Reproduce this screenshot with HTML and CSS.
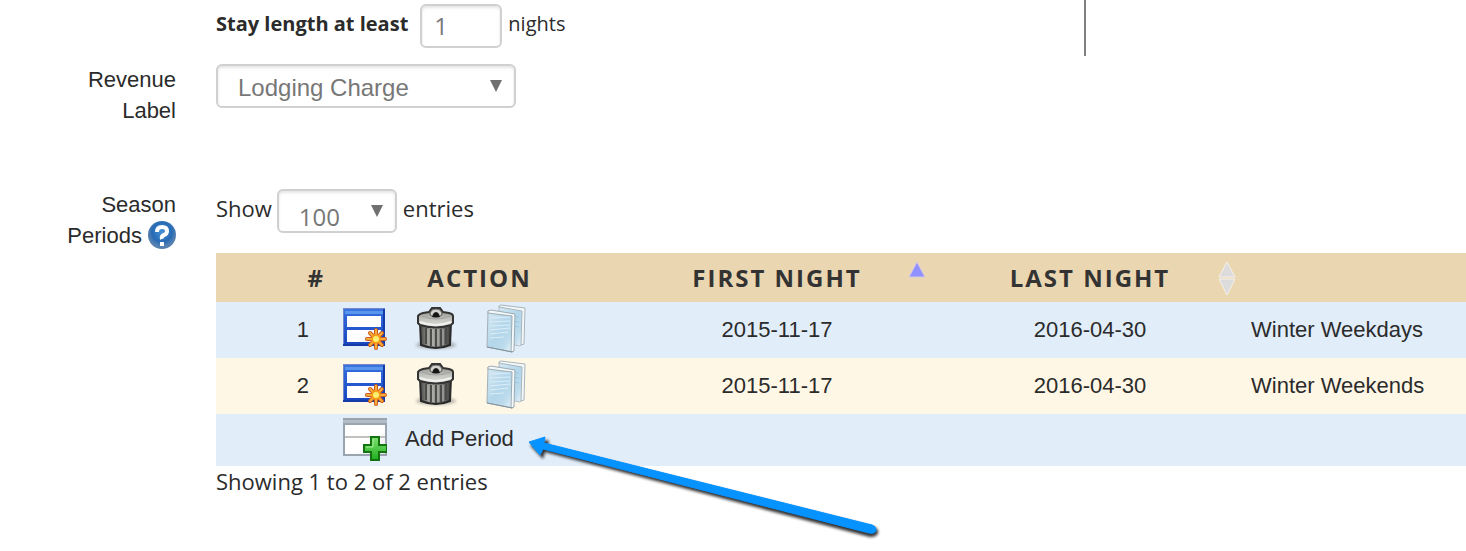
FILE: index.html
```html
<!DOCTYPE html>
<html lang="en">
<head>
<meta charset="utf-8">
<title>Season Periods</title>
<link rel="stylesheet" href="styles.css">
</head>
<body>
<svg class="defs" aria-hidden="true">
  <defs>
    <linearGradient id="blueframe" x2="0" y2="1"><stop offset="0" stop-color="#3f78e0"/><stop offset=".2" stop-color="#2f66d8"/><stop offset="1" stop-color="#1745bf"/></linearGradient>
    <linearGradient id="metal"><stop offset="0" stop-color="#4a4a48"/><stop offset=".35" stop-color="#a5a5a2"/><stop offset=".65" stop-color="#868683"/><stop offset="1" stop-color="#3d3d3b"/></linearGradient>
    <linearGradient id="lid" x2="0" y2="1"><stop offset="0" stop-color="#858580"/><stop offset=".6" stop-color="#c4c4c0"/><stop offset="1" stop-color="#e2e2df"/></linearGradient>
    <linearGradient id="sheet" x2="1" y2="1"><stop offset="0" stop-color="#d5e9f3"/><stop offset=".5" stop-color="#b3d6ea"/><stop offset=".75" stop-color="#bcdbec"/><stop offset="1" stop-color="#edf6fa"/></linearGradient>
    <linearGradient id="pane" x2="1" y2="1"><stop offset="0" stop-color="#fff"/><stop offset=".6" stop-color="#fff"/><stop offset="1" stop-color="#e2e4ec"/></linearGradient>
    <linearGradient id="plus" x2="0" y2="1"><stop offset="0" stop-color="#7fe070"/><stop offset="1" stop-color="#1fae1f"/></linearGradient>
    <radialGradient id="ball" cy=".4"><stop offset="0" stop-color="#4391d6"/><stop offset=".7" stop-color="#286bb5"/><stop offset="1" stop-color="#5580b0"/></radialGradient>
    <filter id="soft" x="-20%" y="-100%" width="140%" height="300%"><feGaussianBlur stdDeviation="1.5"/></filter>
  </defs>
  <symbol id="edit" viewBox="0 0 44 44">
    <path d="M0 1h42v38H0z" fill="url(#blueframe)"/>
    <path d="M0 1h42v1H1v37H0z" fill="#7187c9"/>
    <path d="M2 4h38v3H2z" fill="#5b96ee"/>
    <path d="M40 2h2v37H0v-2h40z" fill="#143ca8"/>
    <path d="M4 9h34v11H4zM4 23h34v12H4z" fill="url(#pane)"/>
    <g stroke="#c85a1c" stroke-width="4" stroke-linecap="round"><path d="M33 23v18M24 32h18M27 26l12 12M39 26L27 38"/></g>
    <g stroke="#f9ae3c" stroke-width="2" stroke-linecap="round"><path d="M33 23v18M24 32h18M27 26l12 12M39 26L27 38"/></g>
    <circle cx="33" cy="32" r="5" fill="#f99b1a"/><circle cx="33" cy="32" r="3" fill="#fff270"/>
  </symbol>
  <symbol id="trash" viewBox="0 0 44 44">
    <ellipse cx="22" cy="38" rx="20" ry="4" fill="#777" opacity=".5" filter="url(#soft)"/>
    <path d="M6 15l1 23q15 6 29 0l1-23z" fill="url(#metal)" stroke="#292929" stroke-width="2"/>
    <path d="M12 21v16M17 22v17M22 22v18M27 22v17M32 21v16" stroke="#4b4b49" stroke-width="2"/>
    <path d="M14 22v16M19 22v17M24 22v17M29 22v16" stroke="#b5b5b2"/>
    <path d="M4 9q1-2 5-3l6-1L18 1h8l3 4 6 1q4 1 4 3v7l-2 2q-15 5-31 0l-2-2z" fill="url(#lid)" stroke="#333" stroke-width="2"/>
    <path d="M6 15q15 6 31 0" fill="none" stroke="#f1f1ee" stroke-width="2"/>
    <path d="M8 9q14 6 28 0" fill="none" stroke="#a1a19d"/>
    <path d="M16 8q0-6 6-6t6 6q-6 5-12 0z" fill="#d2d2cf" stroke="#555"/>
    <path d="M19 7q3-4 6 0l1 3h-8z" fill="#171717"/>
  </symbol>
  <symbol id="copy" viewBox="0 0 44 50">
    <path d="M14 2l24 3-1 35-2 2-21-4z" fill="url(#sheet)" stroke="#b4bfc5" stroke-linejoin="round"/>
    <path d="M14 2l2-1 24 3-1 36-3 1 1-34-23-4z" fill="#f3f7f9" stroke="#a9b6bc"/>
    <path d="M20 11l14 2M20 16l14 2M20 21l14 2" stroke="#9acbe6"/>
    <path d="M3 7l25 4v37L2 43z" fill="url(#sheet)" stroke="#a5b0b7" stroke-linejoin="round"/>
    <path d="M3 7l3-1 24 4-1 37-3 1 1-36L3 9z" fill="#f3f8fa" stroke="#9dabb3"/>
    <path d="M5 14l20-1M5 18l20-1M5 22l20-1M5 26l20-2M5 30l18-2M5 34l14-1" stroke="#dceef8"/>
    <path d="M2 43l25 5" stroke="#7f929d" fill="none"/>
  </symbol>
  <symbol id="add" viewBox="0 0 44 44">
    <path d="M0 1h44v38H0z" fill="#9aa4ae"/>
    <path d="M0 3h44v3H0z" fill="#b3bdc8"/>
    <path d="M2 8h40v11H2zM2 21h40v16H2z" fill="url(#pane)"/>
    <path d="M2 19h40v2H2z" fill="#c1c1bd"/>
    <path d="M28 20h8v8h8v7h-8v8h-8v-8h-7v-7h7z" fill="url(#plus)" stroke="#12730f" stroke-width="2"/>
    <path d="M30 22v8h-7" fill="none" stroke="#a7f098"/>
  </symbol>
</svg>

<form class="form">
  <div class="row row-stay">
    <div class="stay">
      <label class="stay-label" for="stay">Stay length at least</label>
      <input class="control control-stay" id="stay" type="text" value="1">
      <span>nights</span>
    </div>
  </div>

  <div class="row row-revenue">
    <label class="label" for="revenue">Revenue<br>Label</label>
    <div class="picker picker-revenue">
      <select class="control control-revenue" id="revenue"><option>Lodging Charge</option></select>
      <svg class="caret" viewBox="0 0 12 12" aria-hidden="true"><path d="M0 0h12L6 12z"/></svg>
    </div>
  </div>

  <div class="row row-season">
    <div class="label">Season<br>Periods
      <svg class="help" viewBox="0 0 28 28" role="img" aria-label="Help"><circle cx="14" cy="14" r="14" fill="url(#ball)"/><path d="M9 11q0-5 5-5t5 4q0 3-3 4t-2 4" fill="none" stroke="#fff" stroke-width="4"/><path d="M12 21h4v4h-4z" fill="#fff"/></svg>
    </div>
    <div class="season">
      <div class="length">
        <label for="length">Show</label>
        <div class="picker picker-length">
          <select class="control control-length" id="length"><option>100</option></select>
          <svg class="caret" viewBox="0 0 12 12" aria-hidden="true"><path d="M0 0h12L6 12z"/></svg>
        </div>
        <span>entries</span>
      </div>

      <table class="periods">
        <colgroup><col class="col-number"><col class="col-action"><col class="col-first"><col class="col-last"><col></colgroup>
        <thead>
          <tr>
            <th class="number">#</th>
            <th>Action</th>
            <th>First Night<svg class="sort" viewBox="0 0 20 34" aria-hidden="true"><path d="M10 1l8 15H2z" fill="#9090ff" stroke="#d5cbe4"/></svg></th>
            <th>Last Night<svg class="sort" viewBox="0 0 20 34" aria-hidden="true"><path d="M10 1l8 15H2zM10 34l8-16H2z" fill="#dcdcdc" stroke="#f5f1ea"/></svg></th>
            <th></th>
          </tr>
        </thead>
        <tbody>
          <tr>
            <td class="number">1</td>
            <td><div class="actions">
              <button class="action" type="button" aria-label="Edit"><svg class="icon"><use href="#edit"/></svg></button>
              <button class="action" type="button" aria-label="Delete"><svg class="icon"><use href="#trash"/></svg></button>
              <button class="action" type="button" aria-label="Copy"><svg class="icon icon-copy"><use href="#copy"/></svg></button>
            </div></td>
            <td>2015-11-17</td><td>2016-04-30</td><td class="name">Winter Weekdays</td>
          </tr>
          <tr>
            <td class="number">2</td>
            <td><div class="actions">
              <button class="action" type="button" aria-label="Edit"><svg class="icon"><use href="#edit"/></svg></button>
              <button class="action" type="button" aria-label="Delete"><svg class="icon"><use href="#trash"/></svg></button>
              <button class="action" type="button" aria-label="Copy"><svg class="icon icon-copy"><use href="#copy"/></svg></button>
            </div></td>
            <td>2015-11-17</td><td>2016-04-30</td><td class="name">Winter Weekends</td>
          </tr>
          <tr class="add-row">
            <td></td>
            <td colspan="4"><div class="add-cell">
              <a class="add" href="#add-period"><svg class="icon"><use href="#add"/></svg>Add Period</a>
              <svg class="arrow" viewBox="0 0 360 110" aria-hidden="true">
                <g transform="translate(2 3)" fill="#000" opacity=".8" filter="url(#soft)"><path d="M3 7L20 2q3 0 1 6L347 89q5 2 4 6t-8 4L18 14l-2 7z"/></g>
                <path d="M4 7L20 2l-1 6L347 90q4 1 4 5t-7 3L18 14l-3 6z" fill="#0692ff" stroke="#0692ff" stroke-linejoin="round"/>
              </svg>
            </div></td>
          </tr>
        </tbody>
      </table>
      <div class="info">Showing 1 to 2 of 2 entries</div>
    </div>
  </div>
</form>
</body>
</html>
```

FILE: styles.css
```css
* { box-sizing: border-box; }

body {
  min-height: 100vh;
  margin: 0;
  background: #fff;
  color: #2b2b2b;
  font: 22px/31px "Open Sans", sans-serif;
}

.defs { position: absolute; width: 0; height: 0; }

.form { padding-bottom: 53px; }

.row {
  display: grid;
  grid-template-columns: 176px minmax(0, 1fr);
  column-gap: 40px;
}

.row-stay { grid-template-columns: minmax(0, 1086px); }

.stay {
  display: flex;
  align-items: flex-start;
  padding: 4px 0 8px 216px;
  border-right: 2px solid #808080;
  font-size: 20px;
  line-height: 40px;
}

.stay-label { margin-right: 12px; font-weight: 700; }

.label {
  font-family: "Liberation Sans", Arial, sans-serif;
  text-align: right;
}

.row-revenue { padding-top: 8px; }

.control {
  display: block;
  width: 100%;
  height: 44px;
  margin: 0;
  border: 2px solid #d0d0d0;
  border-radius: 6px;
  background: #fff;
  box-shadow: inset 0 2px 3px #e6e6e6;
  color: #777;
  font: 24px/32px "Open Sans", sans-serif;
  appearance: none;
}

.control-stay { width: 82px; margin-right: 6px; padding: 0 12px 2px; }

.control-revenue {
  padding: 4px 20px 0;
  font-family: "Liberation Sans", Arial, sans-serif;
}

.control-length { padding: 10px 20px 0; }

.picker { position: relative; }
.picker-revenue { width: 300px; }
.picker-length { width: 120px; margin: 0 6px 0 5px; }

.caret {
  position: absolute;
  top: 16px;
  right: 14px;
  width: 12px;
  height: 12px;
  fill: #707070;
  pointer-events: none;
}

.row-season { padding-top: 63px; }

.help { width: 28px; height: 28px; vertical-align: -6px; }

.length { display: flex; height: 64px; line-height: 38px; }

.periods {
  width: 100%;
  border-collapse: collapse;
  table-layout: fixed;
  font-family: "Liberation Sans", Arial, sans-serif;
  text-align: center;
}

.col-number { width: 124px; }
.col-action { width: 279px; }
.col-first { width: 316px; }
.col-last { width: 310px; }

.periods th {
  position: relative;
  height: 49px;
  padding: 0;
  background: #ead6b1;
  color: #333;
  font: 700 24px/31px "Open Sans", sans-serif;
  letter-spacing: 2px;
  text-transform: uppercase;
}

.periods td { height: 56px; padding: 0 0 2px; }

.periods .number { padding-right: 31px; text-align: right; }
.periods th.number { padding-right: 15px; }
.periods .name { padding-left: 6px; text-align: left; white-space: nowrap; }

.periods tbody tr { background: #e1edf9; }
.periods tbody tr:nth-child(even) { background: #fff7e5; }

.sort {
  position: absolute;
  top: 8px;
  right: 8px;
  width: 20px;
  height: 34px;
}

.actions { display: flex; gap: 27px; align-items: center; padding-left: 3px; }

.action {
  display: block;
  width: 44px;
  padding: 0;
  border: 0;
  background: none;
}

.icon { display: block; width: 44px; height: 44px; }
.icon-copy { height: 50px; }

.periods .add-row td { height: 52px; }

.add-cell { position: relative; padding-left: 3px; text-align: left; }

.add {
  display: inline-flex;
  gap: 18px;
  align-items: center;
  color: inherit;
  line-height: 44px;
  text-decoration: none;
  vertical-align: top;
}

.arrow {
  position: absolute;
  top: 18px;
  left: 185px;
  width: 360px;
  height: 110px;
  pointer-events: none;
}
```
